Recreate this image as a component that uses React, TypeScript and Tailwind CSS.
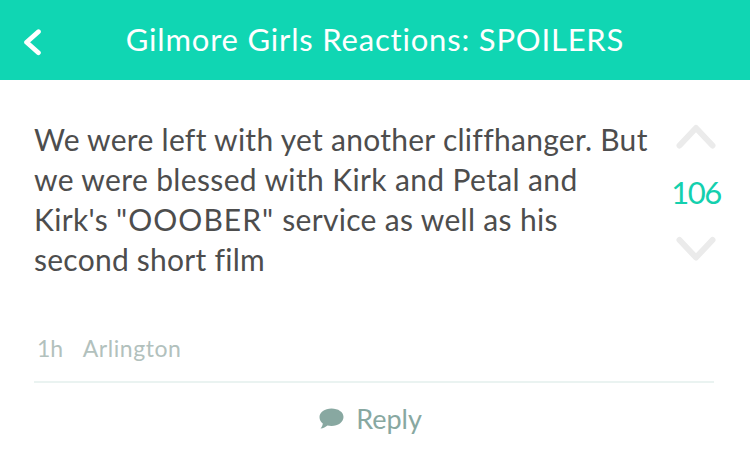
import type { ReactNode } from 'react';

const lines: { id: number; text: ReactNode; className: string }[] = [
  { id: 1, text: 'We were left with yet another cliffhanger. But', className: 'tracking-[0.28px]' },
  { id: 2, text: 'we were blessed with Kirk and Petal and', className: 'tracking-[0.36px]' },
  {
    id: 3,
    text: (
      <>
        Kirk's <span className="tracking-[1.05px]">"OOOBER"</span> service as well as his
      </>
    ),
    className: 'tracking-[0.32px]',
  },
  { id: 4, text: 'second short film', className: 'tracking-[0.25px]' },
];

function Chevron({ d, className }: { d: string; className: string }) {
  return (
    <svg className={className} viewBox="0 0 40 26" fill="none" stroke="currentColor" strokeLinecap="round" strokeLinejoin="round">
      <path strokeWidth={6} d={d} />
    </svg>
  );
}

function Header() {
  return (
    <header className="relative flex h-20 items-center justify-center bg-[#10d6b3] text-white">
      <button type="button" aria-label="Back" className="absolute left-[22px] top-7">
        <svg className="h-7 w-5" viewBox="0 0 20 28" fill="none" stroke="currentColor" strokeLinecap="round" strokeLinejoin="round">
          <path strokeWidth={4.8} d="M16.400 3.700L4.600 14.300l11.800 10.400" />
        </svg>
      </button>
      <h1 className="whitespace-nowrap pb-0.5 text-[31px] leading-10 tracking-[0.81px]">
        Gilmore Girls Reactions: SPOILERS
      </h1>
    </header>
  );
}

function Votes() {
  return (
    <div className="flex w-[60px] shrink-0 flex-col items-center pt-[5px]">
      <button type="button" aria-label="Upvote">
        <Chevron className="h-[26px] w-10 text-[#ebebeb]" d="M3.500 21.500L20 4l16.500 17.500" />
      </button>
      <span className="mt-[22px] text-[31px] leading-10 tracking-[-1.5px] text-[#14d0ae]">106</span>
      <button type="button" aria-label="Downvote" className="mt-6">
        <Chevron className="h-[26px] w-10 text-[#ebebeb]" d="M3.500 4L20 21.500l16.500-17.500" />
      </button>
    </div>
  );
}

export default function App() {
  return (
    <main className="h-[454px] w-[750px] overflow-hidden bg-white font-['Lato',sans-serif]">
      <Header />

      <section className="flex h-[246px] justify-between pl-[34px] pr-6 pt-[39px]">
        <p className="text-[30px] leading-10 text-[#4d4d4d]">
          {lines.map((line) => (
            <span key={line.id} className={`block whitespace-nowrap ${line.className}`}>
              {line.text}
            </span>
          ))}
        </p>
        <Votes />
      </section>

      <footer className="ml-[34px] mr-9">
        <div className="flex h-[57px] gap-5 border-b-2 border-[#eaf3f1] pl-[3px] pt-1.5 text-[23px] leading-8 text-[#b2c1bd]">
          <span className="tracking-[-0.2px]">1h</span>
          <span className="tracking-[0.55px]">Arlington</span>
        </div>
        <button type="button" className="flex h-[71px] w-full items-center justify-center gap-3 pr-[7px] text-[#88a8a1]">
          <svg className="h-[21px] w-[25px]" viewBox="0 0 25 21" fill="currentColor">
            <path d="M12.500 0.500C5.700 0.500 0.500 4.200 0.500 9c0 2.700 1.300 5 3.300 6.500C3.600 17.400 2.700 19.200 1.500 20.500c2.800-.2 5.200-1.400 6.900-3 1.300.3 2.700.5 4.100.5 6.700 0 12-4 12-9s-5.300-8.500-12-8.500z" />
          </svg>
          <span className="text-[27px] leading-9">Reply</span>
        </button>
      </footer>
    </main>
  );
}
